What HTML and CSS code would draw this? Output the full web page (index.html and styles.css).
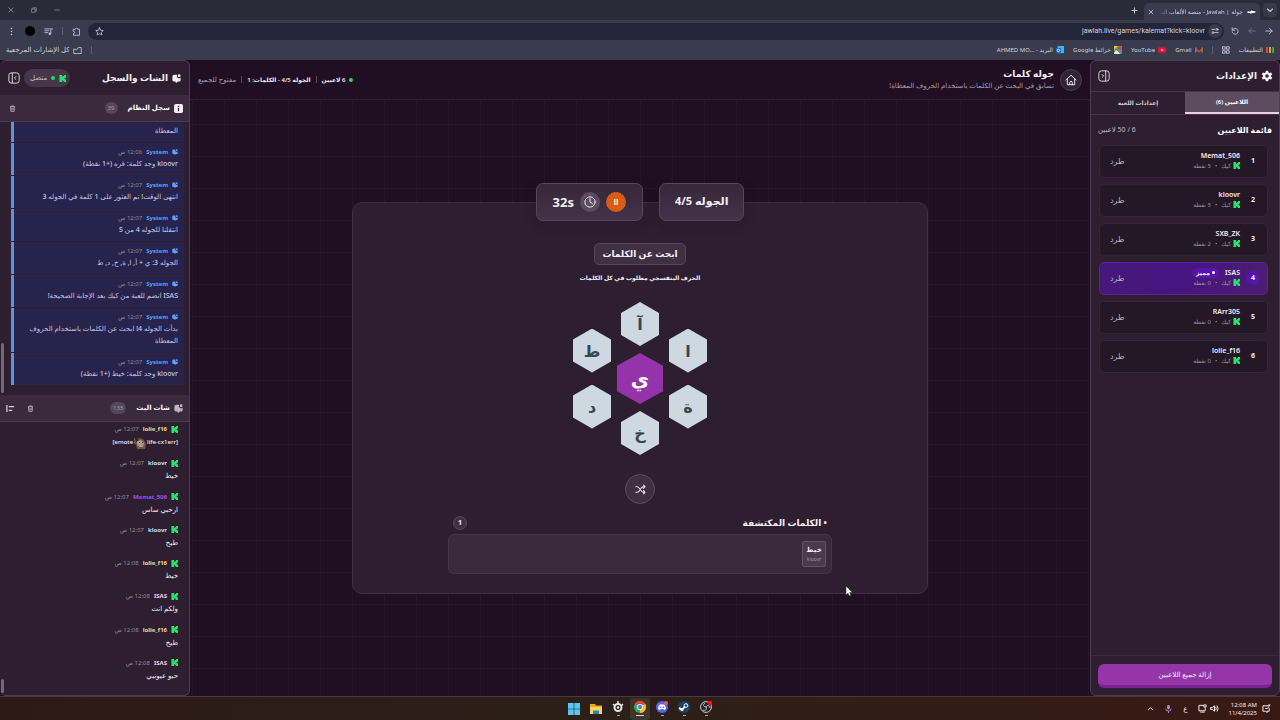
FILE: index.html
```html
<!DOCTYPE html>
<html lang="ar" dir="rtl">
<head>
<meta charset="utf-8">
<title>جولة | Jawlah - منصة الألعاب التفاعلية</title>
<link rel="stylesheet" href="styles.css">
</head>
<body>
<svg class="defs" aria-hidden="true">
  <symbol id="kick" viewBox="0 0 8 8"><path fill="#21e46a" d="M.5 0h3.200v2h1V1h1V0H8v2.800H7v.8H6v.8h1v.8h1V8H5.700V7h-1V6h-1v2H.5z"/></symbol>
  <symbol id="bubble" viewBox="0 0 12 12"><path fill="currentColor" d="M3 1h4a2.700 2.700 0 0 0 4.500 3.500V8a2 2 0 0 1-2 2H8l-2.500 2L4.500 10H3a2.500 2.500 0 0 1-2.500-2.500v-4A2.500 2.500 0 0 1 3 1z"/><circle cx="9.500" cy="2.300" r="1.900" fill="currentColor"/></symbol>
  <symbol id="trash" viewBox="0 0 12 12"><path fill="none" stroke="currentColor" stroke-width="1.400" d="M1.500 3h9M4.500 3V1.500h3V3M2.700 3l.5 8h5.600l.5-8M5 5v4M7 5v4"/></symbol>
  <symbol id="panel" viewBox="0 0 14 14"><rect x="1" y="1" width="12" height="12" rx="3" fill="none" stroke="currentColor" stroke-width="1"/><path fill="none" stroke="currentColor" stroke-width="1" d="M9 1v12M4.500 5l2 2-2 2"/></symbol>
  <symbol id="gear" viewBox="0 0 16 16"><path fill="currentColor" fill-rule="evenodd" d="M6.500 1h3l.5 2.200 1.300.8 2.200-.7 1.500 2.600L13.400 7.400v1.300l1.600 1.500-1.500 2.600-2.200-.7-1.300.8L9.500 15h-3L6 12.900l-1.300-.8-2.200.7L1 10.200l1.600-1.500V7.400L1 5.900l1.500-2.600 2.200.7L6 3.200zM8 5.700a2.300 2.300 0 1 0 0 4.600 2.300 2.300 0 0 0 0-4.600z"/></symbol>
</svg>

<header class="browser">
  <div class="tabstrip">
    <button class="tab-menu" aria-label="بحث في علامات التبويب"><svg viewBox="0 0 8 8"><path class="line" d="M1.500 3L4 5.500 6.500 3"/></svg></button>
    <div class="tab">
      <svg class="favicon" viewBox="0 0 10 6"><path fill="#fff" d="M0 3l2-1 1 1 2-2 1 1h2l2 1-2 1H6L4 5 3 4H1z"/></svg>
      <span class="tab-title">جولة | Jawlah - منصة الألعاب الت</span>
      <button class="plain" aria-label="إغلاق"><svg class="i6" viewBox="0 0 8 8"><path class="line" d="M1.500 1.500l5 5M6.500 1.500l-5 5"/></svg></button>
    </div>
    <button class="plain" aria-label="علامة تبويب جديدة"><svg class="i7" viewBox="0 0 8 8"><path class="line" d="M4 1v6M1 4h6"/></svg></button>
    <div class="window-controls">
      <svg class="i6" viewBox="0 0 8 8"><path class="line" d="M1 4h6"/></svg>
      <svg class="i6" viewBox="0 0 8 8"><path class="line" d="M1 2.500h4.500V7H1zM2.500 2.500V1H7v4.500H5.500"/></svg>
      <svg class="i6" viewBox="0 0 8 8"><path class="line" d="M1 1l6 6M7 1L1 7"/></svg>
    </div>
  </div>
  <div class="toolbar">
    <button class="plain" aria-label="رجوع"><svg class="i8" viewBox="0 0 10 10"><path class="line" d="M1 5h8M5.500 1.500L9 5 5.500 8.500"/></svg></button>
    <button class="plain off" aria-label="تقدم"><svg class="i8" viewBox="0 0 10 10"><path class="line" d="M9 5H1M4.500 1.500L1 5l3.500 3.500"/></svg></button>
    <button class="plain" aria-label="إعادة تحميل"><svg class="i8" viewBox="0 0 10 10"><path class="line" d="M2 3.500A3.700 3.700 0 1 1 1.500 6M1.500 1v3h3"/></svg></button>
    <div class="omnibox">
      <span class="site-info"><svg class="i8" viewBox="0 0 10 10"><path class="line" d="M1 3h4M5 7h4"/><circle class="line" cx="7.500" cy="3" r="1.200"/><circle class="line" cx="2.500" cy="7" r="1.200"/></svg></span>
      <input class="url" dir="ltr" aria-label="العنوان" value="jawlah.live/games/kalemat?kick=kloovr">
      <svg class="i9" viewBox="0 0 12 12"><path class="line" d="M6 1l1.500 3.300 3.500.4-2.600 2.400.7 3.500L6 8.900l-3.100 1.700.7-3.500L1 4.700l3.500-.4z"/></svg>
    </div>
    <svg class="i9" viewBox="0 0 12 12"><path class="line" d="M2 3h2.500a1.500 1.500 0 1 1 3 0H10V11H2V8.500a1.500 1.500 0 1 0 0-3z"/></svg>
    <span class="sep"></span>
    <svg class="i9" viewBox="0 0 12 12"><path class="line" d="M1 2.500h7M1 5h5M1 7.500h4M9 9V2.500h2.500"/><circle cx="7.700" cy="9" r="1.600" fill="#c9c9d6"/></svg>
    <span class="avatar"></span>
    <svg class="i9" viewBox="0 0 12 12" fill="#c9c9d6"><circle cx="6" cy="2" r="1.100"/><circle cx="6" cy="6" r="1.100"/><circle cx="6" cy="10" r="1.100"/></svg>
  </div>
  <nav class="bookmarks">
    <a href="#"><svg class="i8" viewBox="0 0 9 9"><path fill="#e9463c" d="M0 1h2v7H0z"/><path fill="#f0b52b" d="M3.500 1h2v7h-2z"/><path fill="#3dae58" d="M7 1h2v7H7z"/></svg>التطبيقات</a>
    <svg class="i8" viewBox="0 0 10 10"><path class="line" d="M1 1h3v3H1zM6 1h3v3H6zM1 6h3v3H1zM6 6h3v3H6z"/></svg>
    <span class="sep near"></span>
    <a class="near" href="#"><svg class="i8" viewBox="0 0 10 8"><path fill="#4285f4" d="M0 1h2v6H0z"/><path fill="#34a853" d="M8 1h2v6H8z"/><path fill="#ea4335" d="M0 1l5 4 5-4v2.500L5 7 0 3.500z"/></svg>Gmail</a>
    <a href="#"><svg class="i8" viewBox="0 0 10 8"><rect y=".5" width="10" height="7" rx="2" fill="#f1103a"/><path fill="#fff" d="M4 2.300L7 4 4 5.700z"/></svg>YouTube</a>
    <a href="#"><svg class="i8" viewBox="0 0 10 10"><path fill="#34a853" d="M0 0h10v10H0z"/><path fill="#eee" d="M3 5l5 5H0V8z"/><path fill="#f7c52b" d="M0 0h5L0 5z"/><path fill="#4285f4" d="M5 6l5 4V4z"/><circle cx="7" cy="3" r="2.500" fill="#ea4335"/></svg>خرائط Google</a>
    <a href="#"><svg class="i8" viewBox="0 0 10 10"><path fill="#35b8f1" d="M2 0h8v9H2z"/><path fill="#1269c7" d="M0 2.500h6v6H0z"/><circle cx="3" cy="5.500" r="1.500" fill="none" stroke="#fff"/></svg><span>البريد - <bdi>AHMED MO...</bdi></span></a>
    <span class="grow"></span>
    <span class="sep"></span>
    <a href="#"><svg class="i9" viewBox="0 0 12 10"><path class="line" d="M1 3.500V9h10V1H7L5.500 3.500z"/></svg>كل الإشارات المرجعية</a>
  </nav>
</header>

<div class="app">
  <aside class="side settings">
    <div class="side-head">
      <svg class="i12"><use href="#gear"/></svg><h2>الإعدادات</h2><span class="grow"></span>
      <button class="plain" aria-label="طي اللوحة"><svg class="i12"><use href="#panel"/></svg></button>
    </div>
    <div class="tabs" role="tablist">
      <button class="tab-btn active" role="tab" aria-selected="true">اللاعبين (6)</button>
      <button class="tab-btn" role="tab" aria-selected="false">إعدادات اللعبة</button>
    </div>
    <div class="players-head"><h3>قائمة اللاعبين</h3><span>6 / 50 لاعبين</span></div>
    <ol class="players">
      <li><span class="rank">1</span><div class="who"><b>Memat_506</b><small><svg class="i7"><use href="#kick"/></svg>كيك<i>•</i>5 نقطة</small></div><button class="kick">طرد</button></li>
      <li><span class="rank">2</span><div class="who"><b>kloovr</b><small><svg class="i7"><use href="#kick"/></svg>كيك<i>•</i>5 نقطة</small></div><button class="kick">طرد</button></li>
      <li><span class="rank">3</span><div class="who"><b>SXB_ZK</b><small><svg class="i7"><use href="#kick"/></svg>كيك<i>•</i>2 نقطة</small></div><button class="kick">طرد</button></li>
      <li class="vip"><span class="rank">4</span><div class="who"><b>ISAS <em><span class="vip-dot"></span>مميز</em></b><small><svg class="i7"><use href="#kick"/></svg>كيك<i>•</i>0 نقطة</small></div><button class="kick">طرد</button></li>
      <li><span class="rank">5</span><div class="who"><b>RArr305</b><small><svg class="i7"><use href="#kick"/></svg>كيك<i>•</i>0 نقطة</small></div><button class="kick">طرد</button></li>
      <li><span class="rank">6</span><div class="who"><b>lolie_f16</b><small><svg class="i7"><use href="#kick"/></svg>كيك<i>•</i>0 نقطة</small></div><button class="kick">طرد</button></li>
    </ol>
    <div class="side-foot"><button class="remove-all">إزالة جميع اللاعبين</button></div>
  </aside>

  <main class="main">
    <div class="main-head">
      <a class="home" href="#" aria-label="الرئيسية"><svg class="i12" viewBox="0 0 14 14"><path class="line white" d="M1 7l6-5.500L13 7M2.700 6v6.500h8.600V6M5.500 12.500V10a1.500 1.500 0 0 1 3 0v2.500"/></svg></a>
      <div class="game-title"><h1>جوله كلمات</h1><p>تسابق في البحث عن الكلمات باستخدام الحروف المعطاة!</p></div>
      <div class="status"><span class="dot"></span><b>6 لاعبين</b><span class="bar"></span><b>الجوله 4/5 - الكلمات: 1</b><span class="bar"></span><span>مفتوح للجميع</span></div>
    </div>
    <div class="stage">
      <section class="board">
        <div class="pills">
          <div class="pill round">الجوله 4/5</div>
          <div class="pill timer">
            <button class="pause" aria-label="إيقاف مؤقت"><svg class="i8" viewBox="0 0 8 8"><path fill="#ffe3cf" d="M2 1h1.500v6H2zM4.500 1H6v6H4.500z"/></svg></button>
            <span class="clock"><svg class="i12" viewBox="0 0 14 14"><circle class="line white" cx="7" cy="7" r="6"/><path class="line white" d="M7 3v4l3 2"/></svg></span>
            <span dir="ltr">32s</span>
          </div>
        </div>
        <h2 class="find">ابحث عن الكلمات</h2>
        <p class="hint">الحرف البنفسجي مطلوب في كل الكلمات</p>
        <div class="honeycomb">
          <div class="col side-col"><button class="hex">ا</button><button class="hex">ة</button></div>
          <div class="col"><button class="hex">آ</button><button class="hex key">ي</button><button class="hex">خ</button></div>
          <div class="col side-col"><button class="hex">ط</button><button class="hex">د</button></div>
        </div>
        <button class="shuffle" aria-label="خلط الحروف"><svg class="i11" viewBox="0 0 12 12"><path class="line white" d="M1 3h1.500c3 0 3.500 6 6.500 6h2M1 9h1.500c1.200 0 2-1 2.500-2M6.500 5C7 4 7.800 3 9 3h2M9.300 1.200L11 3 9.300 4.800M9.300 7.200L11 9l-1.700 1.800"/></svg></button>
        <div class="found">
          <div class="found-head"><h3>• الكلمات المكتشفة</h3><span class="count">1</span></div>
          <div class="found-box"><div class="word"><b>خيط</b><small>kloovr</small></div></div>
        </div>
      </section>
    </div>
  </main>

  <aside class="side chat">
    <div class="side-head">
      <svg class="i9"><use href="#bubble"/></svg><h2>الشات والسجل</h2><span class="grow"></span>
      <span class="online"><svg class="i7"><use href="#kick"/></svg><span class="dot"></span>متصل</span>
      <button class="plain" aria-label="طي اللوحة"><svg class="i12"><use href="#panel"/></svg></button>
    </div>
    <div class="sec-head">
      <svg class="i9" viewBox="0 0 10 10"><rect width="10" height="10" rx="2" fill="#f4eef5"/><path d="M5 4.300V8M5 2v1.200" stroke="#3a283d" stroke-width="1.400"/></svg><h3>سجل النظام</h3><span class="num">39</span><span class="grow"></span>
      <button class="plain" aria-label="مسح السجل"><svg class="i7"><use href="#trash"/></svg></button>
    </div>
    <div class="log">
      <article><p>المعطاة</p></article>
      <article><header><svg class="i6"><use href="#bubble"/></svg><b>System</b><time>12:06 ص</time></header><p>kloovr وجد كلمة: قره (+1 نقطة)</p></article>
      <article><header><svg class="i6"><use href="#bubble"/></svg><b>System</b><time>12:07 ص</time></header><p>انتهى الوقت! تم العثور على 1 كلمة في الجوله 3</p></article>
      <article><header><svg class="i6"><use href="#bubble"/></svg><b>System</b><time>12:07 ص</time></header><p>انتقلنا للجوله 4 من 5</p></article>
      <article><header><svg class="i6"><use href="#bubble"/></svg><b>System</b><time>12:07 ص</time></header><p>الجوله 3: ي + أ, ا, ة, خ, د, ط</p></article>
      <article><header><svg class="i6"><use href="#bubble"/></svg><b>System</b><time>12:07 ص</time></header><p>ISAS انضم للعبة من كيك بعد الإجابة الصحيحة!</p></article>
      <article><header><svg class="i6"><use href="#bubble"/></svg><b>System</b><time>12:07 ص</time></header><p>بدأت الجوله 4! ابحث عن الكلمات باستخدام الحروف المعطاة</p></article>
      <article><header><svg class="i6"><use href="#bubble"/></svg><b>System</b><time>12:07 ص</time></header><p>kloovr وجد كلمة: خيط (+1 نقطة)</p></article>
      <span class="thumb"></span>
    </div>
    <div class="sec-head">
      <svg class="i9"><use href="#bubble"/></svg><h3>شات البث</h3><span class="num">135</span><span class="grow"></span>
      <button class="plain" aria-label="مسح الشات"><svg class="i7"><use href="#trash"/></svg></button>
      <button class="plain" aria-label="محاذاة"><svg class="i9" viewBox="0 0 10 10"><path d="M1 1v8M3 3h6M3 7h4" stroke="#d8ccda" stroke-width="1.400"/></svg></button>
    </div>
    <div class="stream">
      <article><header><svg class="i7"><use href="#kick"/></svg><b class="gold">lolie_f16</b><time>12:07 ص</time></header><p><span class="emote" dir="ltr">[emote <svg class="i12" viewBox="0 0 12 12"><path fill="#6d5a49" d="M0 1l3 1 3-1 4 2 2 4-1 5H3L2 8 0 6z"/><path fill="#a89a82" d="M3 4l4-1 3 3-1 4H5L3 7z"/><path fill="#2b2222" d="M1 1l4 2-3 2zM5 5h1v1H5zM8 5h1v1H8z"/></svg> life-cx1err]</span></p></article>
      <article><header><svg class="i7"><use href="#kick"/></svg><b class="blue">kloovr</b><time>12:07 ص</time></header><p>خيط</p></article>
      <article><header><svg class="i7"><use href="#kick"/></svg><b class="violet">Memat_506</b><time>12:07 ص</time></header><p>ارحبي ساس</p></article>
      <article><header><svg class="i7"><use href="#kick"/></svg><b class="blue">kloovr</b><time>12:07 ص</time></header><p>طيخ</p></article>
      <article><header><svg class="i7"><use href="#kick"/></svg><b class="gold">lolie_f16</b><time>12:08 ص</time></header><p>خيط</p></article>
      <article><header><svg class="i7"><use href="#kick"/></svg><b class="pink">ISAS</b><time>12:08 ص</time></header><p>ولكم انت</p></article>
      <article><header><svg class="i7"><use href="#kick"/></svg><b class="gold">lolie_f16</b><time>12:08 ص</time></header><p>طيخ</p></article>
      <article><header><svg class="i7"><use href="#kick"/></svg><b class="pink">ISAS</b><time>12:08 ص</time></header><p>حيو عيونيي</p></article>
      <span class="thumb low"></span>
    </div>
  </aside>
</div>

<footer class="taskbar" dir="ltr">
  <div class="dock">
    <span><svg viewBox="0 0 12 12"><path fill="#58c6f4" d="M0 0h5.700v5.700H0zM6.300 0H12v5.700H6.300zM0 6.300h5.700V12H0zM6.300 6.300H12V12H6.300z"/></svg></span>
    <span><svg viewBox="0 0 12 12"><path fill="#e5a927" d="M0 1h5l1 1.500h6V11H0z"/><path fill="#fbd45c" d="M0 4h12v7H0z"/><path fill="#2f80c3" d="M3 7.500h6V11H3z"/></svg></span>
    <span class="open"><svg viewBox="0 0 12 12"><circle cx="6" cy="6.500" r="3.500" fill="#222" stroke="#e9e9e9" stroke-width="2"/><path stroke="#e9e9e9" stroke-width="1.500" d="M6 0v3M1 3l2 2M11 3L9 5"/><circle cx="6" cy="6.500" r="1.200" fill="#fff"/></svg></span>
    <span class="open current"><svg viewBox="0 0 12 12"><circle cx="6" cy="6" r="6" fill="#34a853"/><path fill="#ea4335" d="M6 6L.8 3A6 6 0 0 1 11.200 3z"/><path fill="#fbc116" d="M6 6l5.200-3A6 6 0 0 1 6 12z"/><circle cx="6" cy="6" r="3" fill="#fff"/><circle cx="6" cy="6" r="2.200" fill="#4285f4"/></svg></span>
    <span class="open"><svg viewBox="0 0 12 12"><circle cx="6" cy="6" r="6" fill="#5865f2"/><path fill="#fff" d="M3 4q3-1.500 6 0l1 4-2 1-.7-1H4.700L4 9 2 8z"/><circle cx="4.700" cy="6.300" r=".8" fill="#5865f2"/><circle cx="7.300" cy="6.300" r=".8" fill="#5865f2"/><circle cx="10" cy="2" r="2" fill="#ee5960"/></svg></span>
    <span class="open"><svg viewBox="0 0 12 12"><circle cx="6" cy="6" r="6" fill="#17436f"/><path stroke="#fff" stroke-width="2" d="M1 7l3 1.500L7.500 5"/><circle cx="8" cy="4.500" r="1.800" fill="#17436f" stroke="#fff"/><circle cx="4" cy="8.500" r="1.500" fill="#fff"/></svg></span>
    <span class="open"><svg viewBox="0 0 12 12"><circle cx="6" cy="6" r="5.400" fill="#222126" stroke="#cfcfcf"/><path fill="none" stroke="#cfcfcf" d="M6 6c-3 0-3-3-1-4M6 6c1.500-2.600 4-1 4 1M6 6c1.500 2.600-1 4-3 3"/><circle cx="10" cy="2" r="2.400" fill="#f11"/></svg></span>
  </div>
  <div class="tray">
    <svg class="i7" viewBox="0 0 8 8"><path class="line white" d="M1.500 5.500L4 3l2.500 2.500"/></svg>
    <svg class="i9" viewBox="0 0 10 10"><rect x="3.500" y="1" width="3" height="5" rx="1.500" fill="#b58ad0"/><path fill="none" stroke="#b58ad0" d="M2 5a3 3 0 0 0 6 0M5 8v2"/></svg>
    <span class="lang">ع</span>
    <div class="devices">
      <svg class="i9" viewBox="0 0 10 10"><path class="line white" d="M6 1.500H1v6h7V5M3 9h4M7 1h2v2.500H7z"/></svg>
      <svg class="i9" viewBox="0 0 10 10"><path class="line white" d="M1 4h1.500L5 2v6L2.500 6H1zM6.500 3.500q1.200 1.500 0 3M8 2q2.300 3 0 6"/></svg>
    </div>
    <div class="time"><span>12:08 AM</span><span>11/4/2025</span></div>
    <svg class="i9" viewBox="0 0 10 10"><path class="line white" d="M7 2H1v6h3l1.500 1.500V8H8V5M4 5h2l3-4H7.500"/></svg>
  </div>
</footer>
<svg class="cursor" viewBox="0 0 8 12" aria-hidden="true"><path fill="#fff" stroke="#222" stroke-width=".5" d="M1 1v9l2-1.800L4.300 11l1.500-.7L4.700 7.500h2.800z"/></svg>
</body>
</html>
```
FILE: styles.css
```css
* { box-sizing: border-box; }
body {
  margin: 0; height: 100vh; display: flex; flex-direction: column; overflow: hidden;
  background: #200f22; color: #f4eef5;
  font: 7px/12px "Noto Sans", "DejaVu Sans", sans-serif;
}
h1, h2, h3, p, ol { margin: 0; padding: 0; list-style: none; }
button, input { font: inherit; color: inherit; border: 0; padding: 0; background: none; }
a { color: inherit; text-decoration: none; }
svg { display: block; flex: none; }
.defs { position: absolute; width: 0; height: 0; }
.plain { display: grid; place-items: center; }
.off { opacity: .4; }
.grow { flex: 1; }
.line { fill: none; stroke: #c9c9d6; stroke-width: 1.1; stroke-linejoin: round; stroke-linecap: round; }
.white { stroke: #f4eef5; }
.i6 { width: 6px; height: 6px; }
.i7 { width: 7px; height: 7px; }
.i8 { width: 8px; height: 8px; }
.i9 { width: 9px; height: 9px; }
.i11 { width: 11px; height: 11px; }
.i12 { width: 12px; height: 12px; }
.dot { width: 4px; height: 4px; border-radius: 50%; background: #22dd64; }

/* browser chrome */
.browser { color: #d3d3de; background: #3a3b4d; }
.tabstrip { display: flex; align-items: center; height: 20px; padding: 0 3px 0 8px; background: #2a2b38; }
.tab-menu { width: 14px; height: 14px; border-radius: 4px; background: #393a49; display: grid; place-items: center; margin-left: 3px; }
.tab-menu svg { width: 8px; height: 8px; }
.tab { display: flex; align-items: center; gap: 4px; width: 116px; height: 17px; margin-top: 3px; padding: 0 4px; border-radius: 5px 5px 0 0; background: #3a3b4d; margin-left: 6px; }
.favicon { width: 9px; height: 6px; }
.tab-title { flex: 1; min-width: 0; font-size: 6px; white-space: nowrap; mask-image: linear-gradient(to right, transparent, #000 16px); }
.window-controls { display: flex; gap: 17px; margin-right: auto; opacity: .6; }
.toolbar { display: flex; align-items: center; gap: 9px; height: 22px; padding: 0 7px; }
.omnibox { flex: 1; display: flex; align-items: center; gap: 3px; height: 17px; margin: 0 -2px; padding: 0 2px 0 7px; border-radius: 9px; background: #25253a; }
.site-info { width: 14px; height: 14px; border-radius: 50%; background: #393a4c; display: grid; place-items: center; }
.url { flex: 1; font-family: Roboto, "Noto Sans", sans-serif; text-align: right; outline: 0; }
.sep { width: 1px; height: 8px; background: #5a5b6c; }
.avatar { width: 10px; height: 10px; border-radius: 50%; background: #000; }
.bookmarks { display: flex; align-items: center; gap: 9px; height: 18px; padding: 0 6px 2px; font-size: 6px; }
.bookmarks a { display: flex; align-items: center; gap: 3px; white-space: nowrap; }
.bookmarks a:last-child { font-size: 7px; }

/* application */
.app { flex: 1; min-height: 0; display: flex; }
.side { width: 190px; flex: none; display: flex; flex-direction: column; background: #2e1f30; border: 1px solid #4d3b50; border-radius: 6px; overflow: hidden; }
.side h2 { font-size: 9px; line-height: 14px; }
.side-head { display: flex; align-items: center; gap: 4px; height: 30px; padding: 0 6px 0 7px; flex: none; }
.tabs { display: grid; grid-template-columns: 1fr 1fr; height: 24px; border-top: 1px solid #44324a; border-bottom: 1px solid #44324a; }
.tab-btn { font-size: 6px; font-weight: 600; color: #d3c8d5; }
.tab-btn.active { color: #fff; background: #5d4c5f; border-bottom: 2px solid #e9cdea; }
.players-head { display: flex; justify-content: space-between; align-items: center; height: 30px; padding: 0 7px; color: #c7bbc9; }
.players-head h3 { font-size: 8px; color: #fff; }
.players { display: flex; flex-direction: column; gap: 6px; padding: 0 11px 0 8px; flex: 1; }
.players li { display: flex; align-items: center; height: 33px; padding: 0 7px 2px 10px; border: 1px solid #34253a; border-radius: 5px; background: #241826; }
.players .vip { background: linear-gradient(90deg, #45197a, #46147f 45%, #4c1d70); border-color: #5a219a; }
.rank { width: 14px; height: 14px; border-radius: 50%; text-align: center; line-height: 14px; font-weight: 700; }
.vip .rank { background: #5714ad; }
.who { flex: 1; padding-right: 6px; }
.who b { display: flex; align-items: center; font-size: 7px; line-height: 10px; font-weight: 600; }
.who em { display: flex; align-items: center; gap: 2px; margin-right: 6px; padding: 0 4px; border-radius: 5px; background: #5714ad; font-size: 6px; font-style: normal; font-weight: 700; }
.vip-dot { width: 3px; height: 3px; border-radius: 50%; background: #fff; }
.who small { display: flex; align-items: center; gap: 2px; font-size: 6px; line-height: 10px; color: #9b8f9e; }
.who i { padding: 0 2px; font-style: normal; }
.kick { font-size: 8px; color: #bfb3c2; }
.side-foot { padding: 8px 7px 7px; border-top: 1px solid #3a2a3e; }
.remove-all { width: 100%; height: 24px; border-radius: 6px; background: #9635a8; border-bottom: 3px solid #7d2295; font-size: 7px; font-weight: 500; }

.main { flex: 1; min-width: 0; background: #200f22; display: flex; flex-direction: column; }
.main-head { display: flex; align-items: center; gap: 6px; height: 40px; padding: 0 8px; border-bottom: 1px solid #2f1f32; }
.home { width: 22px; height: 22px; border-radius: 50%; border: 1px solid #4d3d50; background: #332336; display: grid; place-items: center; }
.game-title h1 { font-size: 9px; line-height: 12px; }
.game-title p { color: #a99dac; line-height: 12px; }
.status { display: flex; align-items: center; gap: 4px; margin-right: auto; color: #a99dac; white-space: nowrap; }
.status b { color: #f0e8f2; font-size: 6px; font-weight: 600; }
.bar { width: 1px; height: 7px; margin: 0 1px; background: #5a4a5d; }
.stage {
  flex: 1; padding-top: 102px;
  background: linear-gradient(#26162a 1px, transparent 1px) 0 24px / 32px 32px, linear-gradient(90deg, #26162a 1px, transparent 1px) 2px 0 / 32px 32px;
}
.board { width: 64%; margin: 0 auto; padding-bottom: 19px; border: 1px solid #3f2f43; border-radius: 10px; background: #2d1e30; display: flex; flex-direction: column; align-items: center; }
.pills { display: flex; gap: 16px; margin-top: -20px; }
.pill { display: flex; align-items: center; justify-content: center; height: 38px; border: 1px solid #57475a; border-radius: 7px; background: linear-gradient(#36273a, #43334a); box-shadow: 0 4px 12px #1d102055; font-weight: 700; font-size: 11px; }
.round { padding: 0 15px 3px; }
.timer { gap: 6px; padding: 0 16px; font-size: 13px; }
.pause, .clock { width: 20px; height: 20px; border-radius: 50%; display: grid; place-items: center; background: #d85c12; }
.clock { background: #5b4c5f; }
.find { margin-top: 22px; padding: 0 7px; border: 1px solid #55455a; border-radius: 5px; background: #403044; font-size: 9px; line-height: 20px; }
.hint { margin-top: 7px; font-size: 6px; font-weight: 700; }
.honeycomb { display: flex; align-items: center; gap: 6px; margin-top: 18px; }
.col { display: flex; flex-direction: column; align-items: center; gap: 7px; }
.side-col { gap: 12px; }
.hex { width: 38px; height: 44px; clip-path: polygon(50% 0, 100% 25%, 100% 75%, 50% 100%, 0 75%, 0 25%); background: #cdd8e0; color: #35474f; font-size: 16px; font-weight: 700; line-height: 24px; }
.key { width: 46px; height: 51px; background: #9433aa; color: #fff; font-size: 20px; }
.shuffle { width: 30px; height: 30px; margin-top: 19px; border: 1px solid #5b4b5f; border-radius: 50%; background: #3f2f43; display: grid; place-items: center; }
.found { width: 384px; max-width: 90%; margin-top: 12px; }
.found-head { display: flex; justify-content: space-between; align-items: center; height: 14px; padding: 0 5px; }
.found-head h3 { font-size: 9px; }
.count { width: 14px; height: 14px; border: 1px solid #5b4b5f; border-radius: 50%; background: #403044; text-align: center; line-height: 12px; font-weight: 700; }
.found-box { margin-top: 4px; padding: 6px 5px; display: flex; border: 1px solid #453549; border-radius: 6px; background: #392a3c; }
.word { padding: 3px; min-width: 24px; border: 1px solid #625266; border-radius: 2px; background: #493a4d; text-align: center; }
.word b, .word small { display: block; font-size: 7px; line-height: 10px; }
.word small { font-size: 5px; line-height: 8px; color: #a396a7; }

/* log and stream chat */
.chat { border-left: 0; }
.chat .side-head { height: 34px; padding: 0 8px 0 8px; }
.online { display: flex; align-items: center; gap: 4px; height: 18px; padding: 0 4px 0 6px; border-radius: 9px; background: #46364a; color: #c9becb; font-size: 7px; }
.online + .plain { transform: scaleX(-1); }
.sec-head { display: flex; align-items: center; gap: 4px; flex: none; height: 27px; padding: 0 6px; background: #3a2a3d; border-bottom: 1px solid #4a3a4e; color: #bfb3c2; }
.sec-head h3 { font-size: 7px; color: #fff; }
.sec-head .plain { margin-left: 3px; }
.sec-head .plain + .plain { margin: 0 5px 0 0; }
.num { height: 12px; min-width: 13px; margin-right: 6px; padding: 0 3px; border-radius: 6px; background: #55465a; color: #a79aab; font-size: 6px; text-align: center; }
.log { position: relative; flex: none; height: 273px; display: flex; flex-direction: column; justify-content: flex-end; gap: 1px; padding: 0 5px 10px 11px; overflow: hidden; }
.log article { flex: none; padding: 3px 6px 5px 12px; border-left: 3px solid #5c94df; background: #28234b; color: #c3c8ea; }
.log header, .stream header { display: flex; align-items: center; gap: 4px; line-height: 12px; }
.log header { color: #5da4f5; }
.log b, .stream b { font-size: 6px; }
time { font-size: 6px; color: #94889c; }
.log p { line-height: 12px; font-weight: 500; }
.stream { position: relative; flex: 1; display: flex; flex-direction: column; justify-content: space-between; padding: 1px 11px 13px; }
.stream p { line-height: 13px; font-weight: 500; }
.emote { display: inline-flex; align-items: center; gap: 1px; height: 13px; font-size: 6px; }
.gold { color: #f0d69a; } .blue { color: #c9dcf4; } .violet { color: #a54ae6; } .pink { color: #f3cfe2; }
.thumb { position: absolute; left: 1px; bottom: 2px; width: 3px; height: 50px; border-radius: 2px; background: #756878; }
.low { height: 14px; }

/* desktop taskbar */
.taskbar { display: grid; grid-template-columns: 1fr auto 1fr; align-items: center; height: 24px; border-top: 1px solid #4d3a3c; background: linear-gradient(90deg, #2c1a17, #2c2018 50%, #391914); }
.dock { grid-column: 2; display: flex; gap: 2px; }
.dock span { display: flex; flex-direction: column; align-items: center; justify-content: center; width: 20px; height: 22px; border-radius: 3px; }
.dock svg { width: 12px; height: 12px; }
.dock .open::after { content: ""; width: 3px; height: 1px; margin-top: 2px; background: #aaa09a; }
.dock .current { background: #3f352a; }
.dock .current::after { width: 8px; background: #d7cfe5; }
.tray { display: flex; align-items: center; justify-content: flex-end; gap: 10px; padding-right: 9px; }
.devices { display: flex; gap: 3px; }
.lang { font-size: 7px; }
.time { display: flex; flex-direction: column; text-align: right; font-size: 6px; line-height: 8px; margin-right: -5px; }
.cursor { position: absolute; left: 845px; top: 585px; width: 8px; height: 12px; }
```
